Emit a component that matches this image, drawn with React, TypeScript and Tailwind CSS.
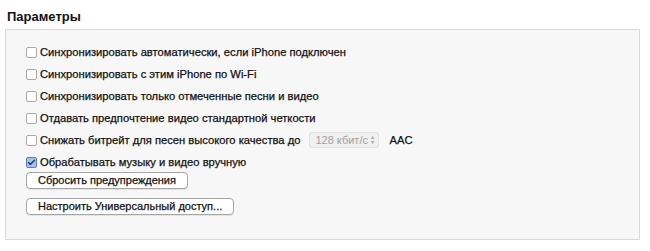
import { Check } from "lucide-react";

function Box({ checked }: { checked?: boolean }) {
  return (
    <span
      className={`flex h-[11px] w-[11px] shrink-0 items-center justify-center rounded-[2px] border ${
        checked ? "border-[#5a7fb5] bg-[#a8c4ec]" : "border-[#a9a9a9] bg-white"
      }`}
    >
      {checked && <Check className="h-[11px] w-[11px] text-[#1d3f7a]" strokeWidth={4} />}
    </span>
  );
}

function Row({ label, checked, children }: { label: string; checked?: boolean; children?: React.ReactNode }) {
  return (
    <div className="flex h-[22px] items-center gap-[3px]">
      <Box checked={checked} />
      <span>{label}</span>
      {children}
    </div>
  );
}

function Btn({ label }: { label: string }) {
  return (
    <button className="flex h-[17px] items-center rounded-[4px] border border-[#a6a6a6] bg-white px-[11px] text-[11px] leading-none text-[#111] shadow-[0_1px_0_rgba(0,0,0,0.08)] [-webkit-text-stroke:0.25px_#111]">
      {label}
    </button>
  );
}

export default function App() {
  return (
    <div className="h-[251px] w-[650px] bg-white px-[5px] pt-[9px] text-[#111]" style={{ fontFamily: "'Liberation Sans', Arial, sans-serif" }}>
      <h2 className="pl-[2px] text-[13px] font-bold leading-[16px]">Параметры</h2>
      <div className="mt-[4px] h-[211px] w-[635px] border border-[#d9d9d9] bg-[#f7f7f8] pl-[20px] pt-[11px] text-[11.2px] [-webkit-text-stroke:0.25px_#111]">
        <Row label="Синхронизировать автоматически, если iPhone подключен" />
        <Row label="Синхронизировать с этим iPhone по Wi-Fi" />
        <Row label="Синхронизировать только отмеченные песни и видео" />
        <Row label="Отдавать предпочтение видео стандартной четкости" />
        <Row label="Снижать битрейт для песен высокого качества до">
          <span className="ml-[6px] flex h-[16px] w-[70px] items-center justify-between rounded-[3px] border border-[#e3e3e3] bg-[#f0f0f0] pl-[5px] pr-[4px] text-[11px] text-[#a0a0a0] [-webkit-text-stroke:0]">
            128 кбит/с
            <span className="flex flex-col text-[6px] leading-[5px]">
              <span>▴</span>
              <span>▾</span>
            </span>
          </span>
          <span className="ml-[7px]">AAC</span>
        </Row>
        <Row label="Обрабатывать музыку и видео вручную" checked />
        <div className="-mt-[1px] flex flex-col items-start gap-[9px]">
          <Btn label="Сбросить предупреждения" />
          <Btn label="Настроить Универсальный доступ..." />
        </div>
      </div>
    </div>
  );
}
